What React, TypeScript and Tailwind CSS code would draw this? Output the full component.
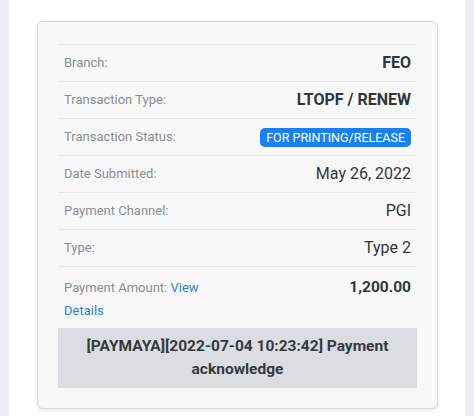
const rows: { label: string; value: React.ReactNode; kind?: "bold" | "plain" }[] = [
  { label: "Branch:", value: "FEO", kind: "bold" },
  { label: "Transaction Type:", value: "LTOPF / RENEW", kind: "bold" },
  {
    label: "Transaction Status:",
    value: (
      <span className="inline-block rounded-[5px] bg-[#1a7ff0] px-[6px] text-[12.5px] leading-[19px] text-white">
        FOR PRINTING/RELEASE
      </span>
    ),
  },
  { label: "Date Submitted:", value: "May 26, 2022", kind: "plain" },
  { label: "Payment Channel:", value: "PGI", kind: "plain" },
  { label: "Type:", value: "Type 2", kind: "plain" },
];

export default function App() {
  return (
    <div
      className="h-[416px] w-full overflow-hidden bg-[#eceef2] px-[9px]"
      style={{ fontFamily: "Roboto, 'Liberation Sans', sans-serif" }}
    >
      <div className="h-full bg-white pl-[28px] pr-[27px] pt-[21px]">
        <div className="rounded-md border border-[#d9dadc] bg-[#f8f8f9] px-[20px] pb-[20px] pt-[22px] shadow-[0_2px_4px_rgba(0,0,0,0.08)]">
          {rows.map((row) => (
            <DetailRow key={row.label} {...row} />
          ))}
          <div className="flex items-start border-t border-[#e7e8ea] pb-[6px] pt-[9px]">
            <div className="w-1/2 px-[6px] text-[13px] leading-[23px] text-[#8a8e94]">
              Payment Amount:{" "}
              <a className="text-[#2f7fc4]" href="#">
                View Details
              </a>
            </div>
            <div className="w-1/2 px-[6px] text-right text-[15.5px] font-bold leading-[23px] text-[#30363d]">
              1,200.00
            </div>
          </div>
          <div className="bg-[#dcdde0] px-4 py-[7px] text-center text-[15.5px] font-bold leading-[23px] text-[#343a40]">
            [PAYMAYA][2022-07-04 10:23:42] Payment acknowledge
          </div>
        </div>
      </div>
    </div>
  );
}

function DetailRow(props: {
  label: string;
  value: React.ReactNode;
  kind?: "bold" | "plain";
}) {
  return (
    <div className="flex h-[37px] items-center border-t border-[#e7e8ea]">
      <div className="w-1/2 px-[6px] text-[13px] text-[#8a8e94]">
        {props.label}
      </div>
      <div
        className={[
          "w-1/2 px-[6px] text-right",
          props.kind === "bold"
            ? "text-[16px] font-bold text-[#30363d]"
            : props.kind === "plain"
              ? "text-[16px] text-[#30363d]"
              : "",
        ].join(" ")}
      >
        {props.value}
      </div>
    </div>
  );
}
